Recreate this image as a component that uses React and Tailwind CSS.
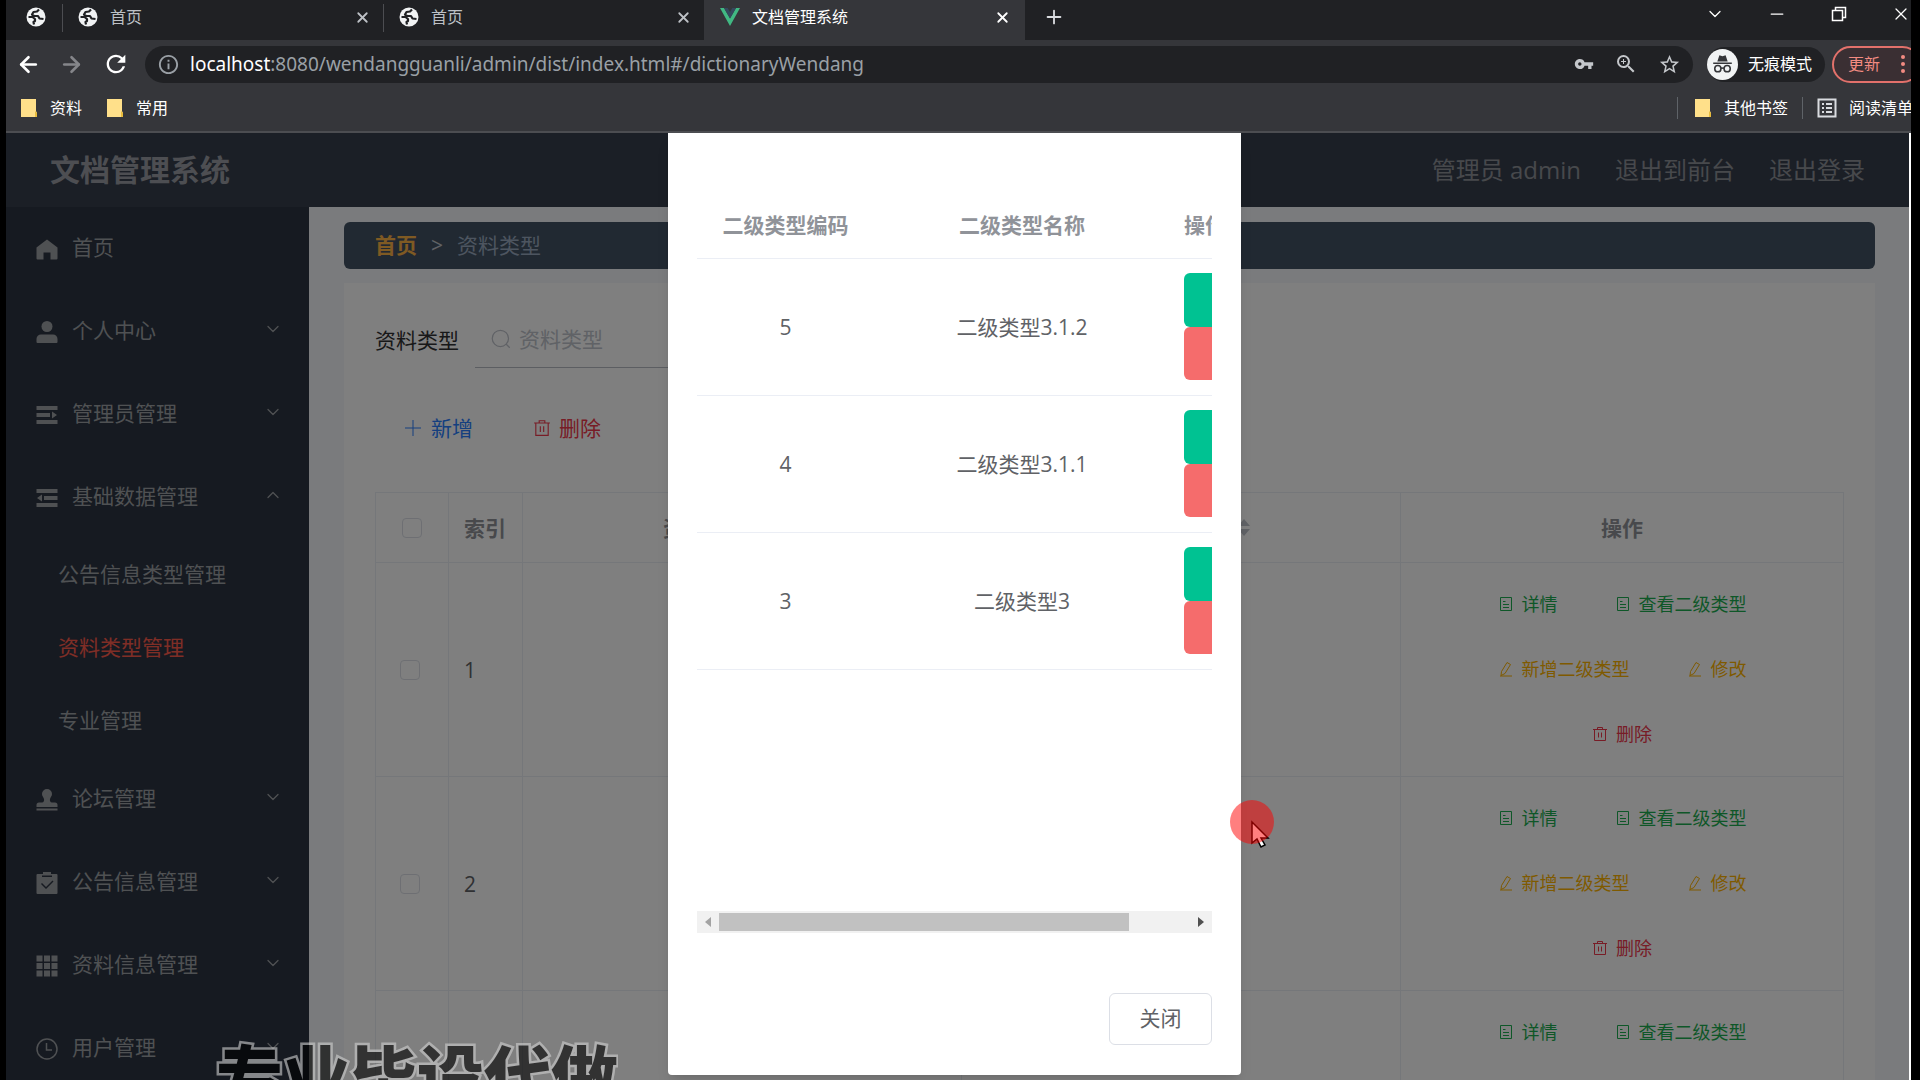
import { ArrowLeft, ArrowRight, ChevronDown, ChevronUp, Minus, Plus, X } from 'lucide-react'
import { MdOutlineInfo, MdRefresh, MdStarBorder, MdVpnKey, MdZoomIn } from 'react-icons/md'

const menu = [
    { name: '首页', icon: 'home' },
    { name: '个人中心', icon: 'user', arrow: 'down' },
    { name: '管理员管理', icon: 'unfold', arrow: 'down' },
    {
        name: '基础数据管理',
        icon: 'fold',
        arrow: 'up',
        children: ['公告信息类型管理', '资料类型管理', '专业管理'],
    },
    { name: '论坛管理', icon: 'stamp', arrow: 'down' },
    { name: '公告信息管理', icon: 'claim', arrow: 'down' },
    { name: '资料信息管理', icon: 'grid', arrow: 'down' },
    { name: '用户管理', icon: 'clock', arrow: 'down' },
]

const subTypes = [
    { code: 5, name: '二级类型3.1.2' },
    { code: 4, name: '二级类型3.1.1' },
    { code: 3, name: '二级类型3' },
]

function MenuIcon({ name }) {
    return (
        <svg viewBox="0 0 22 22" fill="currentColor" className="size-[22px] shrink-0">
            {name === 'home' && <path d="M11 1.5 21.5 9.5V20.5a1 1 0 0 1-1 1H14.5V14.5h-7v7h-6a1 1 0 0 1-1-1V9.5Z" />}
            {name === 'user' && (
                <>
                    <circle cx="11" cy="5.5" r="5.5" />
                    <path d="M5 13.5h12a4.5 4.5 0 0 1 4.5 4.5v3a1 1 0 0 1-1 1h-19a1 1 0 0 1-1-1v-3A4.5 4.5 0 0 1 5 13.5Z" />
                </>
            )}
            {name === 'unfold' && <path d="M.5 2h21v4H.5ZM.5 9H14v4H.5ZM.5 16h21v4H.5ZM16 7.5l5 3.5-5 3.5Z" />}
            {name === 'fold' && <path d="M.5 2h21v4H.5ZM8 9h13.5v4H8ZM.5 16h21v4H.5ZM6 7.5v7L1 11Z" />}
            {name === 'stamp' && (
                <path d="M11 0a5 5 0 0 1 5 5c0 2-1.5 3.3-2 5-.4 1.6.2 3.5 2 3.5h3a2.5 2.5 0 0 1 2.5 2.5v2H.5v-2A2.5 2.5 0 0 1 3 13.5h3c1.8 0 2.4-1.9 2-3.5-.5-1.7-2-3-2-5a5 5 0 0 1 5-5ZM.5 19.5h21v2H.5Z" />
            )}
            {name === 'claim' && (
                <path
                    fillRule="evenodd"
                    d="M7 0h8v2h5.5a1 1 0 0 1 1 1v18a1 1 0 0 1-1 1h-19a1 1 0 0 1-1-1V3a1 1 0 0 1 1-1H7ZM6 3.5h10V5H6ZM5 12l5 5L17.5 9.500 16.500 8.500l-6.500 6.500-4-4Z"
                />
            )}
            {name === 'grid' && (
                <path d="M.5.5h6v6h-6ZM8 .5h6v6H8ZM15.5.5h6v6h-6ZM.5 8h6v6h-6ZM8 8h6v6H8ZM15.5 8h6v6h-6ZM.5 15.5h6v6h-6ZM8 15.5h6v6H8ZM15.5 15.5h6v6h-6Z" />
            )}
            {name === 'clock' && (
                <g fill="none" stroke="currentColor" strokeWidth="1.5">
                    <circle cx="11" cy="11" r="10" />
                    <path d="M10.5 5v7H16" />
                </g>
            )}
        </svg>
    )
}

function Icon({ name, className }) {
    return (
        <svg viewBox="0 0 16 16" fill="none" stroke="currentColor" className={className}>
            {name === 'document' && <path d="M2.5 1.5h11v13h-11ZM5 5.5h2.5M5 8.5h6M5 11.5h6" />}
            {name === 'edit' && <path d="M9 1.500 12.500 3.500 7 12.500 3 14.500 3.500 10.500ZM2 15h12" strokeLinejoin="round" />}
            {name === 'delete' && <path d="M1 3.5h14M5.5 3.5v-2h5v2M2.5 3.5v11h11v-11M6.5 6.5v5M9.5 6.5v5" />}
            {name === 'plus' && <path d="M8 0v16M0 8h16" />}
            {name === 'search' && <path d="M14 7.5a6.5 6.5 0 1 1-13 0a6.5 6.5 0 0 1 13 0ZM12 12l3 3" />}
        </svg>
    )
}

function Globe() {
    return (
        <svg viewBox="0 0 20 20" className="size-5 shrink-0">
            <circle cx="10" cy="10" r="9.5" fill="#f1f3f4" />
            <path
                d="M13 2.500 11 4.500 7.500 5 6 7.500l2 1.500h4l1.500 2.500 4 .5M2.500 10h4l2.500 2v2l-1.500 1 .5 2.500"
                fill="none"
                stroke="#202124"
                strokeWidth="2.200"
                strokeLinejoin="round"
            />
        </svg>
    )
}

function Folder() {
    return (
        <svg viewBox="0 0 18 20" className="h-5 w-[18px] shrink-0">
            <path d="M1 1h15v12l1 2v4H1Z" fill="#ffe08a" />
            <path d="M15 13v6h2v-4Z" fill="#e8bc3c" />
        </svg>
    )
}

function Tab({ title, active }) {
    return (
        <div
            className={
                active
                    ? 'flex h-10 w-[321px] items-center bg-[#35363a] pl-4 pr-3.5 pb-1.5 text-white'
                    : 'flex h-10 w-80 items-center pl-[15px] pr-3 pb-1.5 text-[#bdc1c6]'
            }
        >
            {active ? (
                <svg viewBox="0 0 20 18" className="h-[18px] w-5 shrink-0">
                    <path d="M0 0h4l6 10.5L16 0h4L10 18Z" fill="#41b883" />
                    <path d="M4 0h3.7L10 4l2.3-4H16l-6 10.5Z" fill="#35495e" />
                </svg>
            ) : (
                <Globe />
            )}
            <span className="ml-3 flex-1">{title}</span>
            <button aria-label="关闭标签页">
                <X size={17} strokeWidth={2.5} />
            </button>
        </div>
    )
}

function Browser() {
    return (
        <div className="shrink-0 border-b-2 border-[#4c4d51] bg-[#35363a] text-base leading-5 text-white">
            <div className="flex h-10 items-start bg-[#202124]">
                <div className="flex h-10 w-14 items-center justify-center pb-1.5 pl-1">
                    <Globe />
                </div>
                <div className="mt-1 h-7 w-px bg-[#4c4d51]"></div>
                <Tab title="首页" />
                <div className="mt-1 h-7 w-px bg-[#4c4d51]"></div>
                <Tab title="首页" />
                <Tab title="文档管理系统" active />
                <button aria-label="新标签页" className="ml-[18px] mt-1.5 text-[#dadce0]">
                    <Plus size={22} strokeWidth={2} />
                </button>
                <div className="ml-auto flex items-center gap-[42px] pt-1">
                    <ChevronDown size={20} strokeWidth={1.5} />
                    <Minus size={20} strokeWidth={1.5} />
                    <svg viewBox="0 0 20 20" fill="none" stroke="currentColor" className="size-5">
                        <path d="M3.5 6.5h10v10h-10ZM6.5 6.5v-3h10v10h-3" strokeWidth="1.5" />
                    </svg>
                    <X size={20} strokeWidth={1.5} />
                </div>
            </div>

            <div className="flex h-12 items-center overflow-hidden pl-2.5">
                <div className="flex w-[129px] shrink-0 items-center gap-[18px]">
                    <button aria-label="后退"><ArrowLeft size={25} strokeWidth={2.5} /></button>
                    <button aria-label="前进" className="text-[#85868a]"><ArrowRight size={25} strokeWidth={2.5} /></button>
                    <button aria-label="刷新"><MdRefresh size={28} /></button>
                </div>
                <div className="flex h-[37px] flex-1 items-center rounded-full bg-[#202124] px-3 text-[#9aa0a6]">
                    <MdOutlineInfo size={23} />
                    <div className="ml-2.5 flex-1 font-['Noto_Sans',sans-serif] text-[19px]">
                        <span className="text-white">localhost</span>:8080/wendangguanli/admin/dist/index.html#/dictionaryWendang
                    </div>
                    <div className="flex items-center gap-5 text-[#c4c7cb]">
                        <MdVpnKey size={20} />
                        <MdZoomIn size={24} />
                        <MdStarBorder size={23} />
                    </div>
                </div>
                <div className="ml-3.5 flex h-[35px] w-[118px] shrink-0 items-center gap-2.5 rounded-full bg-[#202124]">
                    <svg viewBox="0 0 30 30" className="size-[31px]">
                        <circle cx="15" cy="15" r="15" fill="#f1f3f4" />
                        <path d="M10 12 12 6l3 1 3-1 2 6ZM6 13h18v1.5H6Z" fill="#35363a" />
                        <g fill="none" stroke="#35363a" strokeWidth="1.5">
                            <circle cx="10.500" cy="19" r="3" />
                            <circle cx="19.500" cy="19" r="3" />
                            <path d="M13.5 18.500h3" />
                        </g>
                    </svg>
                    <span className="whitespace-nowrap">无痕模式</span>
                </div>
                <button className="-mr-2.5 ml-[7px] flex h-[37px] w-[89px] shrink-0 items-center justify-between rounded-full border-2 border-[#e2716b] bg-[#3a2f33] pl-3.5 pr-3.5 text-[#f28b82]">
                    更新
                    <svg viewBox="0 0 4 18" fill="currentColor" className="h-[18px] w-1">
                        <circle cx="2" cy="2" r="2" />
                        <circle cx="2" cy="9" r="2" />
                        <circle cx="2" cy="16" r="2" />
                    </svg>
                </button>
            </div>

            <div className="flex h-[43px] items-center overflow-hidden whitespace-nowrap pb-1 pl-3.5">
                <Folder />
                <span className="ml-3">资料</span>
                <span className="w-6"></span>
                <Folder />
                <span className="ml-3">常用</span>
                <div className="-mr-0.5 ml-auto flex items-center">
                    <span className="mr-4 h-[22px] w-px bg-[#5f6368]"></span>
                    <Folder />
                    <span className="ml-3">其他书签</span>
                    <span className="mx-3.5 h-[22px] w-px bg-[#5f6368]"></span>
                    <svg viewBox="0 0 20 20" fill="none" stroke="#dadce0" strokeWidth="2" className="mr-3 size-5">
                        <path d="M1.5 1.5h17v17h-17ZM5 6h2M5 10h2M5 14h2M9 6h6M9 10h6M9 14h6" />
                    </svg>
                    阅读清单
                </div>
            </div>
        </div>
    )
}

function Sidebar() {
    return (
        <nav className="w-[303px] shrink-0 bg-[#2c3442] text-[#9fa2a6]">
            {menu.map(item => (
                <div key={item.name}>
                    <a href="#" className="flex h-[83px] items-center pl-[30px] pr-[26px]">
                        <MenuIcon name={item.icon} />
                        <span className="ml-3.5 flex-1 pb-1">{item.name}</span>
                        {item.arrow === 'down' && <ChevronDown size={20} strokeWidth={1.5} className="mb-1.5" />}
                        {item.arrow === 'up' && <ChevronUp size={20} strokeWidth={1.5} className="mb-1.5" />}
                    </a>
                    {item.children?.map(child => (
                        <a
                            key={child}
                            href="#"
                            className={
                                child === '资料类型管理'
                                    ? 'flex h-[73px] items-center pb-1 pl-[52px] text-[#ff5c4d]'
                                    : 'flex h-[73px] items-center pb-1 pl-[52px]'
                            }
                        >
                            {child}
                        </a>
                    ))}
                </div>
            ))}
        </nav>
    )
}

function Action({ icon, children, className }) {
    return (
        <button className={`flex h-[65px] items-center gap-2 pb-0.5 ${className}`}>
            <Icon name={icon} className="size-4" />
            {children}
        </button>
    )
}

function Sort() {
    return (
        <svg viewBox="0 0 12 18" fill="#c0c4cc" className="mx-2.5 h-[18px] w-3">
            <path d="M6 0 12 7H0ZM0 10h12L6 17Z" />
        </svg>
    )
}

const checkbox = 'block size-5 appearance-none rounded-sm border border-[#dcdfe6] bg-white'

function Content() {
    return (
        <main className="min-w-0 flex-1 overflow-hidden bg-[#f5f7fa] pl-[35px] pr-[34px] pt-[15px]">
            <div className="flex h-[47px] items-center gap-3.5 rounded-md bg-[#435364] px-[31px] pb-0.5 text-[#9babc0]">
                <a href="#" className="font-bold text-[#ffb546]">首页</a>
                <span className="text-[#c0c4cc]">&gt;</span>
                <span>资料类型</span>
            </div>

            <div className="mt-3.5 bg-white px-[31px] pt-7">
                <div className="flex items-center">
                    <label htmlFor="type" className="w-[100px] text-[#303133]">资料类型</label>
                    <div className="flex h-[57px] w-80 items-center gap-2 border-b border-[#b9bcc4] px-4 text-[#c0c4cc]">
                        <Icon name="search" className="size-5 shrink-0" />
                        <input id="type" placeholder="资料类型" className="w-full bg-transparent outline-none placeholder:text-[#c0c4cc]" />
                    </div>
                </div>

                <div className="mt-[35px] flex h-[52px] items-center gap-[60px] pb-0.5 pl-[30px]">
                    <button className="flex items-center gap-2.5 text-[#2b7fff]">
                        <Icon name="plus" className="size-4" />
                        新增
                    </button>
                    <button className="flex items-center gap-2 text-[#f0384c]">
                        <Icon name="delete" className="size-[18px]" />
                        删除
                    </button>
                </div>

                <table className="mt-[37px] w-full table-fixed border-collapse text-[#606266] [&_td]:border [&_td]:border-[#ebeef5] [&_th]:border [&_th]:border-[#ebeef5]">
                    <thead>
                        <tr className="h-[70px] text-[#909399]">
                            <th className="w-[73px]"><input type="checkbox" aria-label="全选" className={`${checkbox} mx-auto`} /></th>
                            <th className="w-[74px] pl-[15px] text-left">索引</th>
                            <th><div className="flex items-center justify-center">资料类型编码<Sort /></div></th>
                            <th><div className="flex items-center justify-center">资料类型名称<Sort /></div></th>
                            <th className="w-[443px]">操作</th>
                        </tr>
                    </thead>
                    <tbody>
                        {[1, 2, 3].map(n => (
                            <tr key={n} className="h-[214px]">
                                <td className="pl-6"><input type="checkbox" aria-label={`选择 ${n}`} className={checkbox} /></td>
                                <td className="pl-[15px]">{n}</td>
                                <td></td>
                                <td></td>
                                <td>
                                    <div className="flex flex-wrap justify-center gap-x-[57px] px-10 text-lg">
                                        <Action icon="document" className="text-[#1cae50]">详情</Action>
                                        <Action icon="document" className="text-[#1cae50]">查看二级类型</Action>
                                        <Action icon="edit" className="text-[#ffb400]">新增二级类型</Action>
                                        <Action icon="edit" className="text-[#ffb400]">修改</Action>
                                        <Action icon="delete" className="text-[#f0384c]">删除</Action>
                                    </div>
                                </td>
                            </tr>
                        ))}
                    </tbody>
                </table>
            </div>
        </main>
    )
}

function SubTypeDialog() {
    return (
        <div role="dialog" className="flex h-[942px] w-[573px] flex-col rounded-b-sm bg-white px-[29px] pb-[30px] pt-16 text-[#606266] shadow-lg">
            <div className="flex h-[736px] flex-col overflow-hidden">
                <table className="w-[593px] table-fixed border-collapse text-center">
                    <thead>
                        <tr className="h-[61px] border-b border-[#ebeef5] text-[#909399]">
                            <th className="w-[177px] pb-1">二级类型编码</th>
                            <th className="w-[296px] pb-1">二级类型名称</th>
                            <th className="pb-1 pl-3.5 text-left">操作</th>
                        </tr>
                    </thead>
                    <tbody>
                        {subTypes.map(row => (
                            <tr key={row.code} className="h-[137px] border-b border-[#ebeef5]">
                                <td>{row.code}</td>
                                <td>{row.name}</td>
                                <td className="pl-3.5 text-left">
                                    <button className="block h-[54px] rounded-md bg-[#00c292] px-[30px] text-white">修改</button>
                                    <button className="block h-[53px] rounded-md bg-[#f56c6c] px-[30px] text-white">删除</button>
                                </td>
                            </tr>
                        ))}
                    </tbody>
                </table>
                <div className="mt-auto flex h-[22px] shrink-0 items-center bg-[#f1f1f1] px-2">
                    <svg viewBox="0 0 6 10" fill="#a3a3a3" className="h-2.5 w-1.5"><path d="M6 0v10L0 5Z" /></svg>
                    <div className="mx-2 h-[18px] flex-1">
                        <div className="h-full w-[87%] bg-[#c1c1c1]"></div>
                    </div>
                    <svg viewBox="0 0 6 10" fill="#505050" className="h-2.5 w-1.5"><path d="M0 0v10l6-5Z" /></svg>
                </div>
            </div>
            <button className="ml-auto mt-auto h-[52px] w-[103px] rounded-md border border-[#dcdfe6] bg-white pb-0.5">关闭</button>
        </div>
    )
}

function App() {
    return (
        <div className="h-screen overflow-hidden bg-black pl-1.5 pr-[9px] font-['Open_Sans','Noto_Sans_CJK_SC',sans-serif]">
            <div className="flex h-full flex-col overflow-hidden">
                <Browser />
                <div className="relative flex min-h-0 flex-1 flex-col overflow-hidden border-r-2 border-white text-[21px] leading-7">
                    <header className="flex h-[74px] shrink-0 items-center bg-[#373f4d] px-11 text-2xl text-[#8f9299]">
                        <h1 className="flex-1 text-3xl font-bold text-[#9a9da4]">文档管理系统</h1>
                        <div className="flex gap-[34px]">
                            <span>管理员 admin</span>
                            <a href="#">退出到前台</a>
                            <a href="#">退出登录</a>
                        </div>
                    </header>
                    <div className="flex min-h-0 flex-1">
                        <Sidebar />
                        <Content />
                    </div>

                    <div className="absolute inset-0 flex items-start justify-center bg-black/50 pr-1.5">
                        <SubTypeDialog />
                    </div>
                </div>
            </div>

            {/* screen recorder overlays */}
            <div className="pointer-events-none absolute left-[216px] top-[1036px] h-11 overflow-hidden whitespace-nowrap text-[67px] font-black leading-[80px] text-black opacity-60 [-webkit-text-stroke:5px_#d0d0d0] [paint-order:stroke_fill]">
                专业毕设代做
            </div>
            <svg viewBox="0 0 44 50" className="pointer-events-none absolute left-[1230px] top-[800px] h-[50px] w-11">
                <path d="M22 22v21l5-4 4 8 4-2-4-7h7Z" fill="#fff" stroke="#000" strokeWidth="1.5" />
                <circle cx="22" cy="22" r="22" fill="#f00" fillOpacity="0.5" />
            </svg>
        </div>
    )
}

export default App
